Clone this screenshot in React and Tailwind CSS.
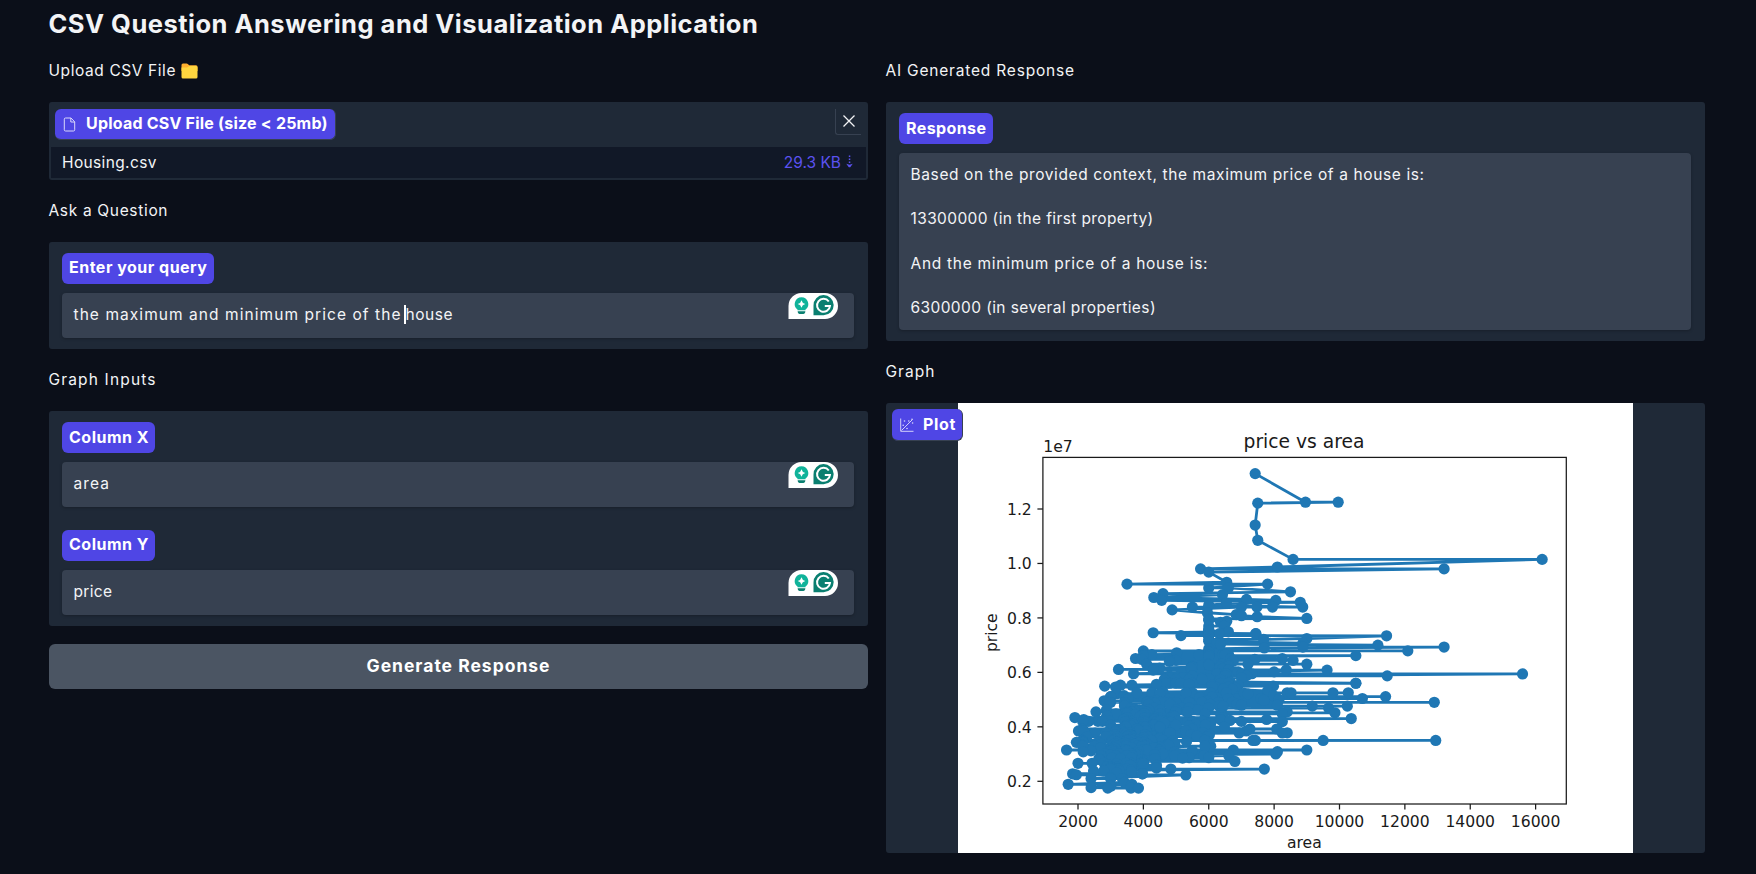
// Housing.csv rows in file order, grouped as "price in thousands:area,area,..."
const HOUSING =
  "13300:7420|12250:8960,9960|12215:7500|11410:7420|10850:7500|10150:8580,16200|9870:8100|9800:5750,13200|9681:6000|9310:6550|9240:3500,7800|9100:6000,6600|8960:8500|8890:4600|8855:6420|8750:4320|8680:7155|8645:8050,4560|8575:8800|8540:6540|8463:6000|8400:8875,7950,5500,7475,7000|8295:4880|8190:5960|8120:6840|8080.94:7000|8043:7482|7980:9000|7962.5:6000|7910:6000|7875:6550|7840:6360|7700:6480,6000|7560:6000,6000|7525:6000|7490:6600|7455:4300|7420:7440,7440,6325|7350:6000,5150,6000,6000|7343:11440|7245:9000|7210:7680,6000|7140:6000|7070:8880,6240|7035:6360|7000:11175|6930:8880,13200|6895:7700|6860:6000|6790:12090,4000|6755:6000|6720:5020|6685:6600|6650:4040,4260,6420,6500,5700,6000|6629:6000|6615:4000,10500|6580:6000|6510:3760,8250,6670|6475:3960,7410|6440:8580,5000|6419:6750|6405:4800|6300:7200,6000,4100,9000,6400|6293:6600|6265:6000|6230:6600,5500|6195:5500,6350,5500|6160:4500,5450|6125:6420|6107.5:3240|6090:6615,6600,8372|6083:4300,9620|6020:6800,8000,6900|5950:3700,6420,7020,6540,7231,6254,7320,6525|5943:15600|5880:7160,6500|5873:5500,11460|5866:4800|5810:5828,5200,4800|5803:7000|5775:6000|5740:5400,4640,5000,6360,5800|5652.5:6660|5600:10500,4800,4700,5000,10500,5500,6360,6600,5136|5565:4400,5400|5530:3300,3650,6100|5523:6900|5495:2817,7980|5460:3150,6210,6100,6600|5425:6825|5390:6710|5383:6450|5320:7800|5285:4600|5250:4260,6540,5500,10269,8400,5300,3800,9800,8520|5243:6050|5229:7085|5215:3180,4500,7200|5145:3410,7980|5110:3000,3000,11410,6100|5075:5720|5040:3540,7600,10700,6600|5033:4800|5005:8150|4970:4410,7686|4956:2800|4935:5948|4907:4200|4900:4520,4095,4120,5400,4770,6300,5800,3000,2970,6720,4646,12900|4893:3420,4995|4865:4350|4830:4160,6040,6862,4815|4795:7000,8100|4767:3420|4760:9166,6321,10240|4753:6440|4690:5170,6000,3630,9667,5400,4320|4655:3745|4620:4160,3880,5680,2870,5010|4613:4510|4585:4000,3840|4550:3760,3640,2550,5320,5360,3520,8400|4543:4100,4990|4515:3510,3450,9860,3520|4480:4510,5885,4000,8250,4040|4473:6360,3162,3510|4445:3750|4410:3968,4900|4403:2880,4880,4920|4382:4950|4375:3900|4340:4500,1905,4075,3500,6450|4319:4032|4305:4400,10360|4277:3400|4270:6360,6360,4500,2175,4360,7770|4235:6650,2787|4200:5500,5040,5850,2610,2953,2747,4410,4000,2325,4600,3640,5800,7000,4079,3520,2145,4500|4193:8250,3450|4165:4840,4080,4046|4130:4632,5985|4123:6060|4098.5:3600|4095:3680,4040,5600|4060:5900,4992,4340,3000,4320|4025:3630,3460,5400|4007.5:4500,3460|3990:4100,6480,4500,3960,4050|3920:7260,5500,3000,3290,3816,8080,2145|3885:3780,3180|3850:5300,3180,7152,4080,3850,2015,2176|3836:3350|3815:3150|3780:4820,3420,3600,5830,2856,8400|3773:8250,2520,6930|3745:3480|3710:3600,4040,6020,4050,3584|3703:3120,5450|3675:3630,3630,5640,3600|3640:4280,3570,3180,3000,3520,5960,4130,2850,2275|3633:3520|3605:4500,4000|3570:3150,4500,4500,3640|3535:3850|3500:4240,3650,4600,2135,3036,3990,7424,3480,3600,3640,5900,3120,7350,3512,9500,5880,12944|3493:4900|3465:3060,5320,2145|3430:4000,3185,3850,2145,2610,1950|3423:4040|3395:4785,3450,3640|3360:3500,4960,4120,4750,3720,3750,3100,3185|3353:2700|3332:2145|3325:4040,4775|3290:2500,3180,6060,3480,3792,4040,2145,5880|3255:4500,3930|3234:3640|3220:4370,2684,4320,3120|3150:3450,3986,3500,4095,1650,3450,6750,9000,3069|3143:4500|3129:5495|3118.85:2398|3115:3000,3850,3500|3087:8100|3080:4960,2160,3090,4500|3045:3800|3010:3090,3240,2835,4600,5076,3750,3630|3003:8050|2975:4352|2961:3000|2940:5850,4960,3600,3660,3480,2700,3150,6615|2870:3040,3630,6000,5400|2852.5:5200|2835:3300,4350,2640|2800:2650,3960|2730:6800,4000|2695:4000|2660:3934,2000,3630,2800,2430,3480,4000|2653:3185,4000|2604:2910|2590:3600,4400,3600|2520:2880,3180,3000|2485:4400,3000|2450:3210,3240,3000,3500,4840,7700|2408:3635|2380:2475,2787,3264|2345:3640|2310:3180|2275:1836,3970,3970|2240:1950|2233:5300|2135:3000|2100:2400,3000,3360|1960:3420|1890:1700,3649|1855:2990|1820:3000|1767.15:2400|1750:3620,2910,3850";

const px = (area) => 120 + (area - 2000) * 0.032687;
const py = (priceK) => 378.3 - (priceK - 2000) * 0.02723;

const POINTS = HOUSING.split("|").flatMap((group) => {
  const [price, areas] = group.split(":");
  return areas.split(",").map((a) => [px(Number(a)), py(Number(price))]);
});

const X_TICKS = [2000, 4000, 6000, 8000, 10000, 12000, 14000, 16000];
const Y_TICKS = ["0.2", "0.4", "0.6", "0.8", "1.0", "1.2"];

function Chart() {
  return (
    <svg
      width="675"
      height="450"
      viewBox="0 0 675 450"
      className="block bg-white font-['DejaVu_Sans',sans-serif] text-[15.6px]"
      fill="#1a1a1a"
    >
      <polyline
        points={POINTS.map(([x, y]) => `${x.toFixed(2)},${y.toFixed(2)}`).join(" ")}
        fill="none"
        stroke="#1f77b4"
        strokeWidth="2.8"
        strokeLinejoin="round"
      />
      <g fill="#1f77b4">
        {POINTS.map(([x, y], i) => (
          <circle key={i} cx={x} cy={y} r="5.6" />
        ))}
      </g>
      <g stroke="#1a1a1a" strokeWidth="1.25" fill="none">
        <rect x="84.9" y="54.4" width="523.4" height="346.6" />
        {X_TICKS.map((t) => (
          <path key={t} d={`M${px(t)} 401v5.5`} />
        ))}
        {Y_TICKS.map((t) => (
          <path key={t} d={`M84.9 ${py(Number(t) * 10000)}h-5.5`} />
        ))}
      </g>
      {X_TICKS.map((t) => (
        <text key={t} x={px(t)} y="423.8" textAnchor="middle">
          {t}
        </text>
      ))}
      {Y_TICKS.map((t) => (
        <text key={t} x="73.8" y={py(Number(t) * 10000) + 5.8} textAnchor="end">
          {t}
        </text>
      ))}
      <text x="85.3" y="49.3">
        1e7
      </text>
      <text x="346" y="44.7" textAnchor="middle" className="text-[18.7px]">
        price vs area
      </text>
      <text x="346.4" y="445.3" textAnchor="middle">
        area
      </text>
      <text transform="translate(39.4 229.7) rotate(-90)" textAnchor="middle">
        price
      </text>
    </svg>
  );
}

function FolderIcon() {
  return (
    <svg width="17" height="16" viewBox="0 0 17 16" className="block">
      <path d="M.5 2A1.5 1.5 0 0 1 2 .5h3.6c.5 0 .9.2 1.2.5l1.4 1.2h6.8A1.5 1.5 0 0 1 16.500 3.700V8H.5z" fill="#ffb02e" />
      <path d="M.5 4.600h5.300c.5 0 .9-.2 1.200-.5l.7-.6c.3-.3.7-.4 1.100-.4h6.200a1.500 1.500 0 0 1 1.500 1.500v9.400a1.500 1.500 0 0 1-1.500 1.500H2A1.500 1.500 0 0 1 .5 14z" fill="#ffd63f" />
    </svg>
  );
}

function FileIcon() {
  return (
    <svg width="13" height="15" viewBox="0 0 13 15" fill="none" stroke="#d9d7fb" strokeWidth="1" strokeLinejoin="round" className="block shrink-0">
      <path d="M8 1H2.500A1.200 1.200 0 0 0 1.300 2.200v10.600A1.200 1.200 0 0 0 2.500 14h8a1.200 1.200 0 0 0 1.200-1.200V4.800z" />
      <path d="M7.800 1v4h4" />
    </svg>
  );
}

function ScatterIcon() {
  return (
    <svg width="14" height="14" viewBox="0 0 14 14" className="block shrink-0">
      <path d="M.7.500V13.300H13.500M1.500 12.500 12.500 1.500" fill="none" stroke="#d9d7fb" strokeWidth=".95" />
      <g fill="#d9d7fb">
        <circle cx="3.200" cy="7.200" r=".8" />
        <circle cx="4.500" cy="3" r=".8" />
        <circle cx="8.800" cy="3" r=".8" />
        <circle cx="12.600" cy="5" r=".8" />
        <circle cx="7" cy="10.500" r=".8" />
        <circle cx="12" cy="1.300" r=".8" />
      </g>
    </svg>
  );
}

function WritingWidget() {
  return (
    <svg width="51" height="26" viewBox="0 0 51 26" className="absolute top-0 right-[15px] block">
      <path d="M.5 26V13A13 13 0 0 1 13.500 0H37a13 13 0 0 1 0 26z" fill="#fff" />
      <path d="M13.500 4.200a6.800 6.800 0 0 0-4 12.300v.7h8v-.7a6.800 6.800 0 0 0-4-12.300z" fill="#10b39a" />
      <path d="M13.500 7.200q.7 3.100 3.800 3.800-3.100.7-3.800 3.800-.7-3.100-3.800-3.800 3.100-.7 3.800-3.800z" fill="#fff" />
      <path d="M9.700 18.200h7.600v.9a1.800 1.800 0 0 1-1.800 1.800h-4a1.800 1.800 0 0 1-1.800-1.800z" fill="#0a7f70" />
      <path d="M25.500 22.300V12.500a10.100 10.100 0 1 1 10.100 9.800z" fill="#0a7f70" />
      <path d="M40.800 8.500A6.500 6.500 0 1 0 42 13h-5.200" fill="none" stroke="#fff" strokeWidth="2" />
    </svg>
  );
}

function Heading({ className = "", children }) {
  return <div className={`mt-[18px] -ml-[0.5px] mb-5 flex h-6 items-center pt-[2px] text-[15.5px] leading-6 ${className}`}>{children}</div>;
}

function Badge({ className = "", children }) {
  return (
    <div
      className={`flex h-[31px] w-fit items-start rounded-md bg-[#4f46e5] text-[16px] font-bold whitespace-nowrap text-white ${className}`}
    >
      {children}
    </div>
  );
}

function Panel({ className = "", children }) {
  return <div className={`rounded-[3px] bg-[#1f2937] ${className}`}>{children}</div>;
}

function Input({ children }) {
  return (
    <div className="relative mt-[9px] flex h-[45px] items-center rounded-[4px] bg-[#374151] pb-[2px] pl-[11.5px] text-[15.5px] shadow-[0_1px_3px_rgba(0,0,0,0.25)]">
      {children}
      <WritingWidget />
    </div>
  );
}

export default function App() {
  return (
    <div className="min-h-[874px] bg-[#0b0f19] pt-2 pr-[51px] pl-[49px] font-['Inter',sans-serif] text-[#f3f4f6]">
      <h1 className="-ml-[0.5px] h-8 text-[25.5px] leading-8 font-bold tracking-[0.49px] whitespace-nowrap">
        CSV Question Answering and Visualization Application
      </h1>
      <div className="grid grid-cols-2 gap-[18px]">
        <div>
          <Heading className="gap-[5px] tracking-[0.586px]">
            Upload CSV File
            <FolderIcon />
          </Heading>
          <Panel className="flex h-[78px] flex-col p-[2px]">
            <div className="flex h-[43px] items-start justify-between pt-[5px] pr-[5px] pl-1">
              <Badge className="border-r border-b border-[#374151] pr-[7px] pl-[8px] leading-[28px] tracking-[0.21px]">
                <span className="mt-2 mr-[10px]">
                  <FileIcon />
                </span>
                Upload CSV File (size &lt; 25mb)
              </Badge>
              <div className="flex h-[26px] w-[26px] items-center justify-center rounded-bl-[3px] border-b border-l border-[#374151] pb-px">
                <svg width="12" height="12" viewBox="0 0 12 12" className="block" stroke="#f3f4f6" strokeWidth="1.300">
                  <path d="M.5.500l11 11M11.500.500l-11 11" />
                </svg>
              </div>
            </div>
            <div className="flex h-[31px] justify-between bg-[#111827] pr-[13px] pl-[11px] text-[15.5px] leading-[31px]">
              <span className="tracking-[0.36px]">Housing.csv</span>
              <span className="flex text-[#5b52f0]">
                29.3 KB
                <svg width="7" height="13" viewBox="0 0 7 13" className="mt-[8px] ml-[5px] block" fill="currentColor">
                  <path d="M2.800.500h1.500v1.500H2.800zM2.800 3.500h1.500V5H2.800zM2.800 6.500h1.500V8H2.800zM.3 8.800l3.200 1 3.200-1-2.500 3.400H2.800z" />
                </svg>
              </span>
            </div>
          </Panel>

          <Heading className="tracking-[0.668px]">Ask a Question</Heading>
          <Panel className="h-[107px] pt-[11px] pr-[14px] pl-[13px]">
            <Badge className="pr-[6px] pl-[7px] leading-[28px] tracking-[0.492px]">Enter your query</Badge>
            <Input>
              <span className="tracking-[1.066px]">the maximum and minimum price of the</span>
              <span className="ml-[2px] h-[19px] w-[2px] bg-white" />
              <span className="tracking-[0.539px]">house</span>
            </Input>
          </Panel>

          <Heading className="tracking-[1.164px]">Graph Inputs</Heading>
          <Panel className="h-[215px] pt-[11px] pr-[14px] pl-[13px]">
            <Badge className="pr-[6px] pl-[7px] leading-[30px] tracking-[0.5px]">Column X</Badge>
            <Input>
              <span className="tracking-[1.109px]">area</span>
            </Input>
            <Badge className="mt-[23px] pr-[5.5px] pl-[7px] leading-[28px] tracking-[0.5px]">Column Y</Badge>
            <Input>
              <span className="tracking-[0.3px]">price</span>
            </Input>
          </Panel>

          <button className="mt-[18px] block h-[45px] w-full rounded-md bg-[#4b5563] pb-px text-[17.5px] font-bold tracking-[0.992px] text-white">
            Generate Response
          </button>
        </div>

        <div>
          <Heading className="tracking-[0.801px]">AI Generated Response</Heading>
          <Panel className="h-[239px] pt-[11px] pr-[14px] pl-[13px]">
            <Badge className="px-[7px] leading-[30px] tracking-[0.406px]">Response</Badge>
            <div className="mt-[9px] flex h-[177px] flex-col gap-[22.2px] rounded-[4px] bg-[#374151] pt-[10.900px] pl-[11.5px] text-[15.5px] leading-[22.2px] shadow-[0_1px_3px_rgba(0,0,0,0.25)]">
              <span className="tracking-[0.617px]">Based on the provided context, the maximum price of a house is:</span>
              <span className="tracking-[0.38px]">13300000 (in the first property)</span>
              <span className="tracking-[0.718px]">And the minimum price of a house is:</span>
              <span className="tracking-[0.4px]">6300000 (in several properties)</span>
            </div>
          </Panel>

          <Heading className="tracking-[1.060px]">Graph</Heading>
          <Panel className="relative flex h-[450px] justify-center">
            <Chart />
            <Badge className="absolute top-[6px] left-[6px] h-[32px] border-r border-b border-[#374151] pr-[6px] pl-[8px] leading-[31px] tracking-[0.7px]">
              <span className="mt-[9px] mr-[9px]">
                <ScatterIcon />
              </span>
              Plot
            </Badge>
          </Panel>
        </div>
      </div>
    </div>
  );
}
